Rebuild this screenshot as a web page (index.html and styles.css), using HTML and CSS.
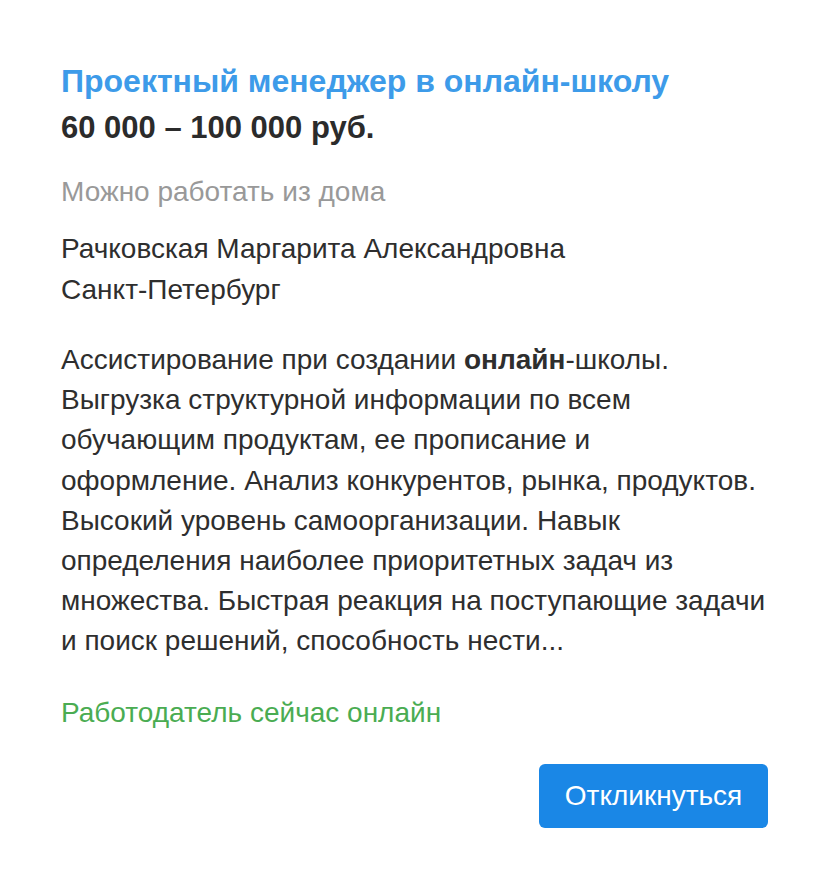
FILE: index.html
```html
<!DOCTYPE html>
<html lang="ru">
<head>
<meta charset="utf-8">
<link rel="stylesheet" href="styles.css">
</head>
<body>
<div class="card">
  <h1 class="title">Проектный менеджер в онлайн-школу</h1>
  <div class="salary">60 000 – 100 000 руб.</div>
  <div class="remote">Можно работать из дома</div>
  <div class="contact">
    <div>Рачковская Маргарита Александровна</div>
    <div>Санкт-Петербург</div>
  </div>
  <p class="desc">Ассистирование при создании <b>онлайн</b>-школы. Выгрузка структурной информации по всем обучающим продуктам, ее прописание и оформление. Анализ конкурентов, рынка, продуктов. Высокий уровень самоорганизации. Навык определения наиболее приоритетных задач из множества. Быстрая реакция на поступающие задачи и поиск решений, способность нести...</p>
  <div class="online">Работодатель сейчас онлайн</div>
  <div class="actions">
    <button class="respond">Откликнуться</button>
  </div>
</div>
</body>
</html>
```
FILE: styles.css
```css
html, body {
  margin: 0;
  background: #ffffff;
}
.card {
  padding: 61px 60px 0 61px;
  font-family: "Liberation Sans", Arial, sans-serif;
  color: #333333;
}
.title {
  margin: 0;
  font-size: 32px;
  line-height: 40px;
  font-weight: 700;
  color: #3d9be9;
}
.salary {
  font-size: 31px;
  line-height: 40px;
  font-weight: 700;
  color: #2b2b2b;
  margin-top: 7px;
}
.remote {
  margin-top: 24px;
  font-size: 28px;
  line-height: 40px;
  color: #999999;
}
.contact {
  margin-top: 16px;
  font-size: 28px;
  line-height: 41px;
  color: #2e2e2e;
}
.desc {
  margin: 30px 0 0;
  font-size: 28px;
  line-height: 40.2px;
  color: #2e2e2e;
}
.online {
  margin-top: 31px;
  font-size: 28px;
  line-height: 40px;
  color: #4aac52;
}
.actions {
  display: flex;
  justify-content: flex-end;
  margin-top: 31px;
}
.respond {
  width: 229px;
  height: 64px;
  padding: 0;
  border: 0;
  border-radius: 6px;
  background: #1a87e6;
  color: #ffffff;
  font-family: "Liberation Sans", Arial, sans-serif;
  font-size: 28px;
}
```
